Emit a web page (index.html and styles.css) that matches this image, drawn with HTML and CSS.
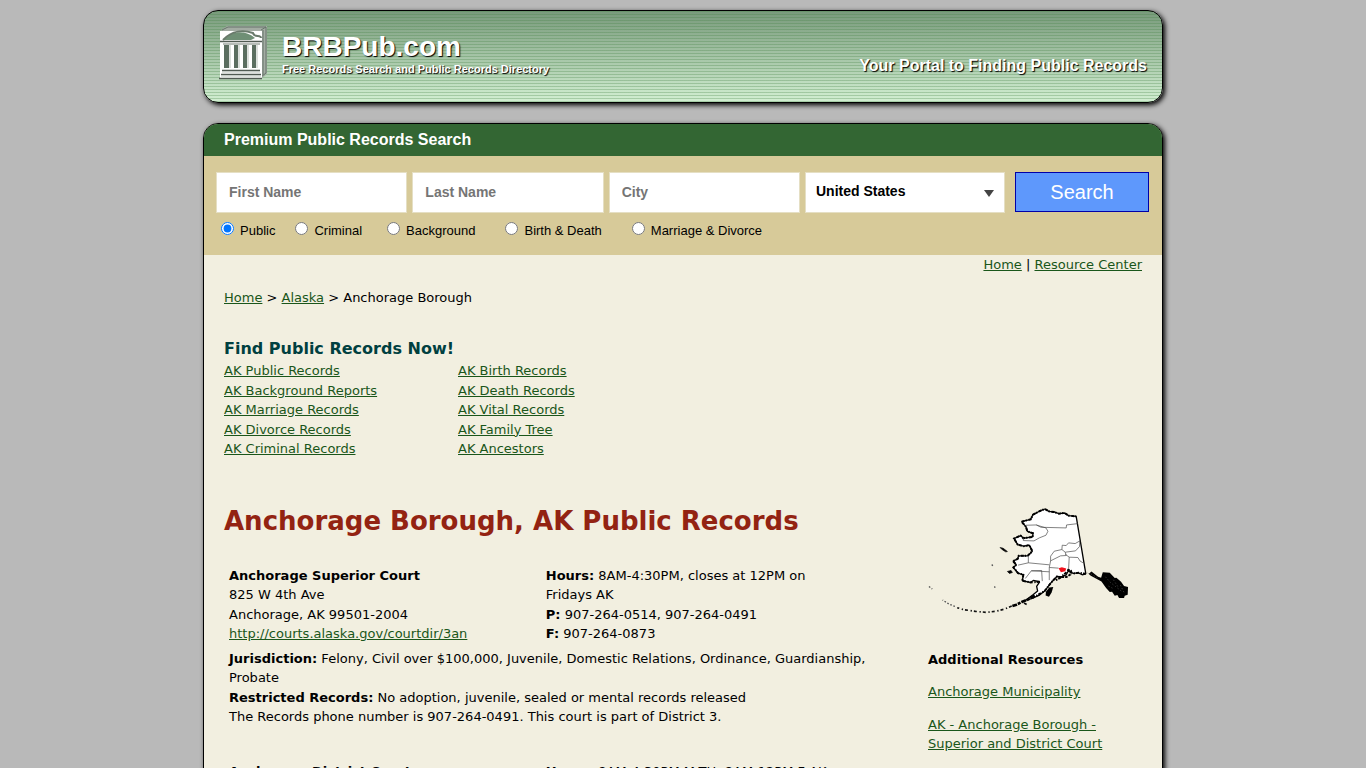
FILE: index.html
```html
<!DOCTYPE html>
<html lang="en">
<head>
<meta charset="utf-8">
<title>Anchorage Borough, AK Public Records</title>
<link rel="stylesheet" href="styles.css">
</head>
<body>
<header class="masthead">
  <svg class="logo" viewBox="0 0 48 54" aria-hidden="true">
    <path d="M2 4 8 0H48V48L42 53" fill="#a3aca3"/>
    <path d="M3 4 9 1H47V47L42 51M42 4 47 1M44 4V49" fill="none" stroke="#66756a"/>
    <rect x="1" y="5" width="42" height="48" fill="#fff"/>
    <path d="M4 14C12 4 27 4 36 12L32 14Z" fill="#6f8f75"/>
    <path d="M4 14C13 4 25 4 34 7C35 12 42 8 42 12" fill="none" stroke="#6a7a6c" stroke-width="2"/>
    <path d="M1 15.500H43M3 44.500H41M2 48.500H42M0 52.500H43" stroke="#505a52" stroke-width="1.500"/>
    <path d="M4 18H41" stroke="#6f7a70"/>
    <path d="M5 19h5v23H5ZM15 19h4v23h-4ZM24 19h4v23h-4ZM33 19h4v23h-4Z" fill="#5b6e60"/>
    <path d="M11 19v23M20 19v23M29 19v23M38 19v23M3 46H41M2 50H42" stroke="#b9c1ba"/>
  </svg>
  <div class="brand">
    <div class="site-name">BRBPub.com</div>
    <div class="tagline">Free Records Search and Public Records Directory</div>
  </div>
  <div class="slogan">Your Portal to Finding Public Records</div>
</header>

<div class="page">
  <h2 class="search-title">Premium Public Records Search</h2>
  <form class="search">
    <div class="fields">
      <input class="field" type="text" placeholder="First Name" aria-label="First Name">
      <input class="field" type="text" placeholder="Last Name" aria-label="Last Name">
      <input class="field" type="text" placeholder="City" aria-label="City">
      <div class="select-wrap">
        <select class="country" aria-label="Country"><option>United States</option></select>
        <svg class="arrow" viewBox="0 0 10 7" aria-hidden="true"><path d="M0 0H10L5 7Z" fill="#444"/></svg>
      </div>
      <button class="submit" type="button">Search</button>
    </div>
    <div class="kinds">
      <label class="kind"><input class="radio" type="radio" name="kind" checked>Public</label>
      <label class="kind mid"><input class="radio" type="radio" name="kind">Criminal</label>
      <label class="kind wide"><input class="radio" type="radio" name="kind">Background</label>
      <label class="kind wide"><input class="radio" type="radio" name="kind">Birth &amp; Death</label>
      <label class="kind"><input class="radio" type="radio" name="kind">Marriage &amp; Divorce</label>
    </div>
  </form>

  <div class="content">
    <nav class="topnav"><a href="#">Home</a> | <a href="#">Resource Center</a></nav>
    <nav class="crumbs"><a href="#">Home</a> &gt; <a href="#">Alaska</a> &gt; Anchorage Borough</nav>

    <h3 class="find-title">Find Public Records Now!</h3>
    <div class="find-links">
      <ul class="links">
        <li><a href="#">AK Public Records</a></li>
        <li><a href="#">AK Background Reports</a></li>
        <li><a href="#">AK Marriage Records</a></li>
        <li><a href="#">AK Divorce Records</a></li>
        <li><a href="#">AK Criminal Records</a></li>
      </ul>
      <ul class="links">
        <li><a href="#">AK Birth Records</a></li>
        <li><a href="#">AK Death Records</a></li>
        <li><a href="#">AK Vital Records</a></li>
        <li><a href="#">AK Family Tree</a></li>
        <li><a href="#">AK Ancestors</a></li>
      </ul>
    </div>

    <div class="columns">
      <main class="main">
        <h1 class="title">Anchorage Borough, AK Public Records</h1>
        <section class="court">
          <div><b>Anchorage Superior Court</b><br>825 W 4th Ave<br>Anchorage, AK 99501-2004<br><a href="#">http://courts.alaska.gov/courtdir/3an</a></div>
          <div><b>Hours:</b> 8AM-4:30PM, closes at 12PM on Fridays AK<br><b>P:</b> 907-264-0514, 907-264-0491<br><b>F:</b> 907-264-0873</div>
          <div class="notes"><b>Jurisdiction:</b> Felony, Civil over $100,000, Juvenile, Domestic Relations, Ordinance, Guardianship, Probate<br><b>Restricted Records:</b> No adoption, juvenile, sealed or mental records released<br>The Records phone number is 907-264-0491. This court is part of District 3.</div>
        </section>
        <section class="court">
          <div><b>Anchorage District Court</b></div>
          <div><b>Hours:</b> 8AM-4:30PM M-TH; 8AM-12PM F AK</div>
        </section>
      </main>
      <aside class="side">
        <svg class="map" viewBox="37 25 606 325" role="img" aria-label="Map of Alaska with Anchorage Borough highlighted">
          <path d="M318 69 345 62 352 48 373 37 388 31 400 38 415 40 430 45 447 43 459 51 482 53 511 226 500 229 489 223 473 225 459 216 452 229 436 236 424 234 407 252 387 278 370 291 347 301 331 305 352 289 366 278 363 264 372 250 353 246 344 252 320 247 323 229 307 224 293 207 302 199 292 188 306 181 309 172 336 172 350 158 341 140 324 143 306 138 295 120 315 111 323 119 351 115 352 104 335 98 331 85Z" fill="#fff" stroke="#000" stroke-width="4" stroke-linejoin="bevel"/>
          <path d="M318 69 345 62 352 48 373 37 388 31 400 38 415 40 430 45 447 43 459 51 482 53M511 226 489 223 473 225 459 216 436 236 424 234 407 252 387 278 347 301M372 250 344 252 320 247 323 229 307 224 293 207 302 199 292 188 306 181 309 172 336 172 350 158 341 140 324 143 306 138 295 120 315 111 323 119 351 115 352 104 335 98 331 85 318 69" fill="none" stroke="#000" stroke-width="6" stroke-dasharray="9 3 4 5"/>
          <path d="M330 80 362 79 376 86 452 88 453 79 487 75M362 79 391 88 397 98 391 110 371 118 355 127 323 126 323 118M493 127 479 135 459 133 452 141 440 140 439 153 416 158 405 173 405 187 401 207 401 245M439 153 449 161 480 157 492 144 493 127M449 161 452 171 435 172 405 187M449 167 461 176 459 216M461 176 487 177 494 188 503 193M338 172V193L307 200M338 193 401 199M329 240 347 217 378 216 380 248M347 217 401 220M401 207 429 209" fill="none" stroke="#444" stroke-width="2"/>
          <path d="M429 209 439 206 452 210 449 218 436 221Z" fill="#f0101c"/>
          <path d="M455 214 466 217 465 228 452 236 438 236 421 245" fill="none" stroke="#000" stroke-width="6" stroke-dasharray="8 3"/>
          <path d="M391 280 401 267 413 266 408 282 400 295 390 291Z"/>
          <path d="M512 220 520 226 528 219 548 235 557 238 562 221 583 223 598 239 603 238 617 250 626 263 638 266 637 289 628 292 626 299 611 299 606 290 598 292 590 280 583 281 572 269 558 249 526 232Z"/>
          <path d="M570 235 584 251 600 264 618 278M594 244 609 267M579 263 591 269M526 226 545 238M615 260 626 282" fill="none" stroke="#555" stroke-width="2" stroke-dasharray="4 6"/>
          <path d="M357 291 338 303 318 311 302 319 290 323" fill="none" stroke="#000" stroke-width="8" stroke-dasharray="15 3 9 3"/>
          <path d="M288 323 264 333 239 339 211 342 179 339 143 334 124 328M325 314 336 320" fill="none" stroke="#111" stroke-width="5" stroke-dasharray="9 6 4 8"/>
          <path d="M117 324 99 317 80 305M39 264 49 272M228 198 231 202M236 264 238 268" fill="none" stroke="#555" stroke-width="4" stroke-dasharray="5 5"/>
          <path d="M253 147 262 149 275 159 270 160 260 154ZM275 219 286 216 290 222 281 225Z" stroke="#000" stroke-width="2"/>
        </svg>
        <h4 class="side-title">Additional Resources</h4>
        <p class="side-link"><a href="#">Anchorage Municipality</a></p>
        <p class="side-link"><a href="#">AK - Anchorage Borough - Superior and District Court</a></p>
      </aside>
    </div>
  </div>
</div>
</body>
</html>
```

FILE: styles.css
```css
* { box-sizing: border-box; }

body {
  margin: 0;
  padding: 10px 16px;
  background: #b9b9b9;
  color: #000;
  font: 13px/1.5 "DejaVu Sans", Verdana, sans-serif;
}

a { color: #1a561a; }
h1, h2, h3, h4, p, ul { margin: 0; padding: 0; }

.masthead, .page {
  max-width: 960px;
  margin: 0 auto;
  border: 1px solid #000;
  box-shadow: 2px 2px 5px #000;
}

.masthead {
  display: flex;
  align-items: flex-start;
  padding: 15px;
  border-radius: 15px;
  background:
    repeating-linear-gradient(rgba(70, 130, 70, 0.3) 0 1px, transparent 1px 3px),
    linear-gradient(#789a7b, #d2efd2);
  color: #fff;
  font-family: "Liberation Sans", Arial, sans-serif;
  font-weight: bold;
  text-shadow: 1px 1px 1px #000;
}

.logo { width: 48px; height: 54px; margin-bottom: 7px; }
.brand { margin-left: 15px; padding-top: 5px; }
.site-name { font-size: 28px; line-height: 32px; }
.tagline { font-size: 11px; line-height: 12px; }
.slogan { margin-left: auto; padding-top: 30px; font-size: 16px; line-height: 20px; }

.page {
  margin-top: 20px;
  border-radius: 15px 15px 0 0;
  background: #f2efe0;
  overflow: hidden;
}

.search-title {
  padding: 0 20px;
  background: #336633;
  color: #fff;
  font: bold 16px/32px "Liberation Sans", Arial, sans-serif;
}

.search {
  padding: 16px 13px 14px 12px;
  background: #d7ca99;
  font-family: "Liberation Sans", Arial, sans-serif;
}

.fields { display: flex; gap: 5px; }

.field, .country {
  height: 41px;
  border: 1px solid #e5dfc4;
  border-radius: 0;
  background: #fff;
  font: bold 14px "Liberation Sans", Arial, sans-serif;
}
.field { flex: 1; min-width: 0; padding: 0 12px 2px; }
.field::placeholder { color: #757575; }

.select-wrap { position: relative; width: 200px; }
.country { width: 100%; padding: 0 10px 3px; appearance: none; color: #000; }
.arrow { position: absolute; right: 11px; top: 18px; width: 10px; height: 7px; pointer-events: none; }

.submit {
  width: 134px;
  height: 40px;
  margin-left: 5px;
  border: 1px solid #0000a8;
  background: #5e98fc;
  color: #fff;
  font: 20px "Liberation Sans", Arial, sans-serif;
}

.kinds { display: flex; gap: 20px; padding: 8px 0 0 5px; }
.kind { display: flex; align-items: flex-start; font-size: 13px; line-height: 20px; }
.kind.mid { margin-right: 5px; }
.kind.wide { margin-right: 10px; }
.radio { width: 13px; height: 13px; margin: 1px 6px 0 0; }

.content { padding: 0 20px; }
.topnav { text-align: right; }
.crumbs { margin-top: 13px; }
.find-title { margin-top: 30px; color: #004040; font-size: 16px; line-height: 24px; }
.find-links { display: flex; }
.links { width: 234px; list-style: none; }

.columns { display: flex; margin-top: 48px; }
.main { flex: 1; min-width: 0; }
.title { margin-bottom: 31px; color: #932312; font-size: 26px; line-height: 28px; }

.court { display: grid; grid-template-columns: 45% 45%; row-gap: 5px; margin-bottom: 35px; }
.court > div { padding: 0 5px; }
.court .notes { grid-column: 1 / -1; }
.court .notes { margin-right: -5%; }

.side { width: 214px; }
.map { display: block; width: 202px; height: 108px; margin-bottom: 35px; }
.side-title { font-size: 13px; }
.side-link { margin-top: 13px; }
```
